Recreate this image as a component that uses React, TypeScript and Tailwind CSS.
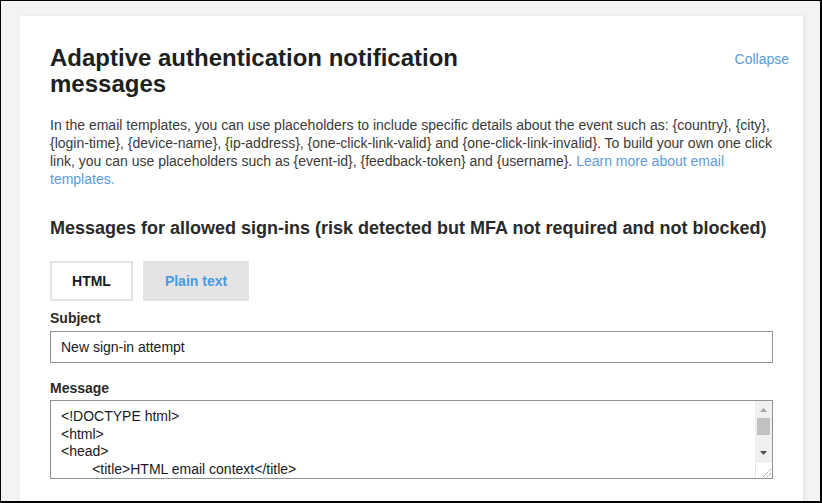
import { useState } from "react";

const messageBody = `<!DOCTYPE html>
<html>
<head>
\t<title>HTML email context</title>
</head>
<body>
\t<p>We detected a new sign-in attempt.</p>
</body>
</html>`;

function FakeScrollbar() {
  return (
    <div className="flex w-[17px] shrink-0 flex-col bg-[#f0f0f0]">
      {/* up arrow, greyed since we're at the top */}
      <div className="flex h-[17px] items-center justify-center">
        <svg width="7" height="4" viewBox="0 0 7 4">
          <path d="M3.5 0L7 4H0z" fill="#a3a3a3" />
        </svg>
      </div>
      <div className="mx-[2px] h-[17px] bg-[#c1c1c1]" />
      <div className="flex-1" />
      <div className="flex h-[17px] items-center justify-center">
        <svg width="7" height="4" viewBox="0 0 7 4">
          <path d="M0 0H7L3.5 4z" fill="#505050" />
        </svg>
      </div>
      {/* resize grip */}
      <div className="relative h-[17px] border-l border-t border-[#e6e6e6] bg-white">
        <svg className="absolute bottom-[1px] right-[1px]" width="9" height="9" viewBox="0 0 9 9">
          <path d="M9 1L1 9M9 5L5 9" stroke="#7a7a7a" strokeWidth="1" strokeDasharray="1 1" />
        </svg>
      </div>
    </div>
  );
}

export default function App() {
  const [tab, setTab] = useState<"html" | "text">("html");
  const [subject, setSubject] = useState("New sign-in attempt");
  const [message, setMessage] = useState(messageBody);

  return (
    <div
      className="h-[503px] overflow-hidden border-l border-t border-r-2 border-b-2 border-black bg-[#f2f3f3] pl-[19px] pt-[15px] pr-[17px]"
      style={{ fontFamily: '"Liberation Sans", Arial, sans-serif' }}
    >
      <div className="h-[600px] bg-white pl-[30px] pr-[14px] pt-[29px] shadow-[2px_0_4px_rgba(0,0,0,0.07)]">
        {/* Header */}
        <div className="flex items-start justify-between">
          <h2 className="max-w-[480px] text-[24px] font-bold leading-[26px] text-[#1d1f21]">
            Adaptive authentication notification messages
          </h2>
          <a href="#" className="mt-[1px] text-[14px] leading-[26px] text-[#5b9bd8]">
            Collapse
          </a>
        </div>

        <div className="mr-4">
          <p className="mt-[19px] text-[14px] leading-[18px] text-[#3a3a3a]">
            In the email templates, you can use placeholders to include specific details about the event such as:
            {" {country}, {city}, {login-time}, {device-name}, {ip-address}, {one-click-link-valid} and {one-click-link-invalid}. To build your own one click link, you can use placeholders such as {event-id}, {feedback-token} and {username}. "}
            <a href="#" className="text-[#5b9bd8]">
              Learn more about email templates.
            </a>
          </p>

          <h3 className="mt-[29px] text-[18px] font-bold leading-[22px] text-[#2a2a2a]">
            Messages for allowed sign-ins (risk detected but MFA not required and not blocked)
          </h3>

          {/* Format tabs */}
          <div className="mt-[22px] flex gap-[10px]">
            <button
              onClick={() => setTab("html")}
              className={
                tab === "html"
                  ? "h-10 w-[83px] border-2 border-[#e3e3e3] bg-white text-[14px] font-bold text-[#16191f]"
                  : "h-10 w-[83px] bg-[#e5e3e4] text-[14px] font-bold text-[#4a9ae0]"
              }
            >
              HTML
            </button>
            <button
              onClick={() => setTab("text")}
              className={
                tab === "text"
                  ? "h-10 w-[106px] border-2 border-[#e3e3e3] bg-white text-[14px] font-bold text-[#16191f]"
                  : "h-10 w-[106px] bg-[#e5e3e4] text-[14px] font-bold text-[#4a9ae0]"
              }
            >
              Plain text
            </button>
          </div>

          <label className="mt-2 block text-[14px] font-bold leading-[18px] text-[#2a2a2a]">Subject</label>
          <input
            value={subject}
            onChange={(e) => setSubject(e.target.value)}
            className="mt-1 block h-8 w-full border border-[#8a9494] px-[10px] text-[14px] text-[#16191f] outline-none"
          />

          <label className="mt-4 block text-[14px] font-bold leading-[18px] text-[#2a2a2a]">Message</label>
          <div className="mt-[3px] flex h-[79px] border border-[#8a9494]">
            <textarea
              value={message}
              onChange={(e) => setMessage(e.target.value)}
              className="h-full flex-1 resize-none overflow-hidden pl-[10px] pt-[7px] text-[14px] leading-[17.7px] text-[#16191f] outline-none"
              style={{ tabSize: 8 }}
            />
            <FakeScrollbar />
          </div>
        </div>
      </div>
    </div>
  );
}
